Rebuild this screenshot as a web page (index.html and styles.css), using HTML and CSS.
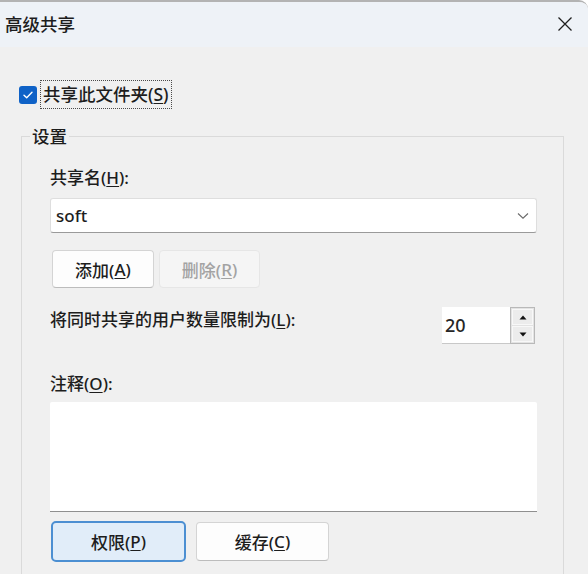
FILE: index.html
```html
<!DOCTYPE html>
<html lang="zh-CN">
<head>
<meta charset="utf-8">
<title>高级共享</title>
<link rel="stylesheet" href="styles.css">
</head>
<body>
<div class="window">
  <div class="titlebar">
    <span class="title">高级共享</span>
    <svg class="close" width="16" height="16" viewBox="0 0 16 16"><path d="M1.5 1.5 L14.5 14.5 M14.5 1.5 L1.5 14.5" stroke="#1f1f1f" stroke-width="1.3" fill="none"/></svg>
  </div>
  <div class="content">
    <div class="share-row">
      <span class="checkbox"><svg width="18" height="18" viewBox="0 0 18 18"><path d="M5 9.2 L7.7 11.8 L13 6.3" stroke="#fff" stroke-width="1.4" fill="none" stroke-linecap="round" stroke-linejoin="round"/></svg></span>
      <span class="focus-label">共享此文件夹(<u>S</u>)</span>
    </div>
    <div class="group">
      <div class="group-title">设置</div>
      <div class="label first">共享名(<u>H</u>):</div>
      <div class="combo">
        <span class="combo-text">soft</span>
        <svg class="chevron" width="12" height="8" viewBox="0 0 12 8"><path d="M1 1.5 L6 6.2 L11 1.5" stroke="#6a6a6a" stroke-width="1.1" fill="none"/></svg>
      </div>
      <div class="btn-row">
        <div class="btn add">添加(<u>A</u>)</div>
        <div class="btn disabled">删除(<u>R</u>)</div>
      </div>
      <div class="spin-row">
        <div class="label spin-label">将同时共享的用户数量限制为(<u>L</u>):</div>
        <div class="spinbox">
          <div class="spin-input">20</div>
          <div class="spin-btns">
            <div class="spin-btn"><svg width="8" height="5" viewBox="0 0 8 5"><path d="M4 0.5 L7.5 4.5 L0.5 4.5 Z" fill="#111"/></svg></div>
            <div class="spin-btn"><svg width="8" height="5" viewBox="0 0 8 5"><path d="M0.5 0.5 L7.5 0.5 L4 4.5 Z" fill="#111"/></svg></div>
          </div>
        </div>
      </div>
      <div class="label comment-label">注释(<u>O</u>):</div>
      <div class="textarea"></div>
      <div class="bottom-row">
        <div class="btn primary">权限(<u>P</u>)</div>
        <div class="btn cache">缓存(<u>C</u>)</div>
      </div>
    </div>
  </div>
</div>
</body>
</html>
```
FILE: styles.css
```css
html, body {
  margin: 0;
  padding: 0;
  background: #ffffff;
  width: 588px;
  height: 574px;
  overflow: hidden;
}
body {
  font-family: "Noto Sans", "Noto Sans CJK SC", sans-serif;
  font-size: 17px;
  font-weight: 500;
  color: #1d1d1d;
}
u {
  text-decoration-thickness: 1px;
  text-underline-offset: 2px;
}
.window {
  width: 588px;
  height: 574px;
  background: #f0f0f0;
  border-top-right-radius: 9px;
  overflow: hidden;
  box-sizing: border-box;
  border-top: 2px solid #b3b3b3;
}
.titlebar {
  height: 45px;
  background: #eef2f7;
  display: flex;
  align-items: center;
  justify-content: space-between;
  padding: 0 15px 0 5px;
}
.title {
  font-size: 17.5px;
  line-height: 24px;
  margin-top: -1px;
}
.close {
  display: block;
  margin-top: -2px;
}
.content {
  display: flex;
  flex-direction: column;
}
.share-row {
  display: flex;
  align-items: center;
  margin-top: 34px;
  padding-left: 19px;
  height: 27px;
}
.checkbox {
  width: 18px;
  height: 18px;
  border-radius: 3px;
  background: #0f62c7;
  margin-right: 4px;
  margin-top: 1px;
}
.checkbox svg {
  display: block;
}
.focus-label {
  font-size: 17.5px;
  line-height: 25px;
  height: 25px;
  padding: 0 1px;
  outline: 1px dotted #4a4a4a;
  outline-offset: 0;
  border: 1px solid transparent;
}
.group {
  margin: 28px 0 0 21px;
  width: 543px;
  box-sizing: border-box;
  border: 1px solid #dadada;
  padding: 0 26px 0 28px;
  height: 600px;
  display: flex;
  flex-direction: column;
  align-items: stretch;
}
.group-title {
  align-self: flex-start;
  margin: -11px 0 0 -20px;
  padding: 0 2px;
  line-height: 20px;
  background: #f0f0f0;
  font-size: 17.5px;
}
.label {
  line-height: 24px;
  font-size: 17px;
}
.label.first {
  margin-top: 20px;
}
.combo {
  margin-top: 8px;
  height: 35px;
  box-sizing: border-box;
  background: #ffffff;
  border: 1px solid #dedede;
  border-bottom: 1px solid #9a9a9a;
  border-radius: 3px;
  display: flex;
  align-items: center;
  justify-content: space-between;
  padding: 0 7px 0 5px;
}
.combo-text {
  font-size: 17px;
  line-height: 24px;
}
.chevron {
  display: block;
}
.btn-row {
  display: flex;
  gap: 5px;
  margin-top: 17px;
  padding-left: 2px;
}
.btn {
  height: 38px;
  box-sizing: border-box;
  border-radius: 4px;
  display: flex;
  align-items: center;
  justify-content: center;
  font-size: 17px;
  background: #fdfdfd;
  border: 1px solid #d4d4d4;
  border-bottom-color: #bcbcbc;
}
.btn.add {
  width: 102px;
}
.btn.disabled {
  width: 101px;
  background: #f5f5f5;
  border-color: #e6e6e6;
  color: #a3a3a3;
}
.spin-row {
  margin-top: 19px;
  display: flex;
  align-items: flex-start;
  justify-content: space-between;
  padding-right: 2px;
}
.spin-label {
  margin-top: 1px;
}
.spinbox {
  display: flex;
  height: 37px;
}
.spin-input {
  width: 68px;
  box-sizing: border-box;
  background: #ffffff;
  border-bottom: 1px solid #c8c8c8;
  padding-left: 3px;
  display: flex;
  align-items: center;
  font-size: 18px;
  color: #262626;
}
.spin-btns {
  width: 25px;
  box-sizing: border-box;
  border: 1px solid #b9b9b9;
  background: #e3e3e3;
  display: flex;
  flex-direction: column;
  padding: 1px;
  gap: 1px;
}
.spin-btn {
  flex: 1;
  background: #ececec;
  border: 1px solid #f8f8f8;
  display: flex;
  align-items: center;
  justify-content: center;
}
.spin-btn svg {
  display: block;
}
.comment-label {
  margin-top: 28px;
}
.textarea {
  margin-top: 6px;
  height: 110px;
  box-sizing: border-box;
  background: #ffffff;
  border-bottom: 1px solid #8f8f8f;
  border-radius: 2px 2px 0 0;
}
.bottom-row {
  margin-top: 9px;
  display: flex;
  align-items: center;
  gap: 10px;
  padding-left: 1px;
}
.btn.primary {
  width: 135px;
  height: 41px;
  background: #e1edf9;
  border: 2px solid #4c8fd2;
  border-radius: 5px;
}
.btn.cache {
  width: 133px;
  height: 39px;
}
```
